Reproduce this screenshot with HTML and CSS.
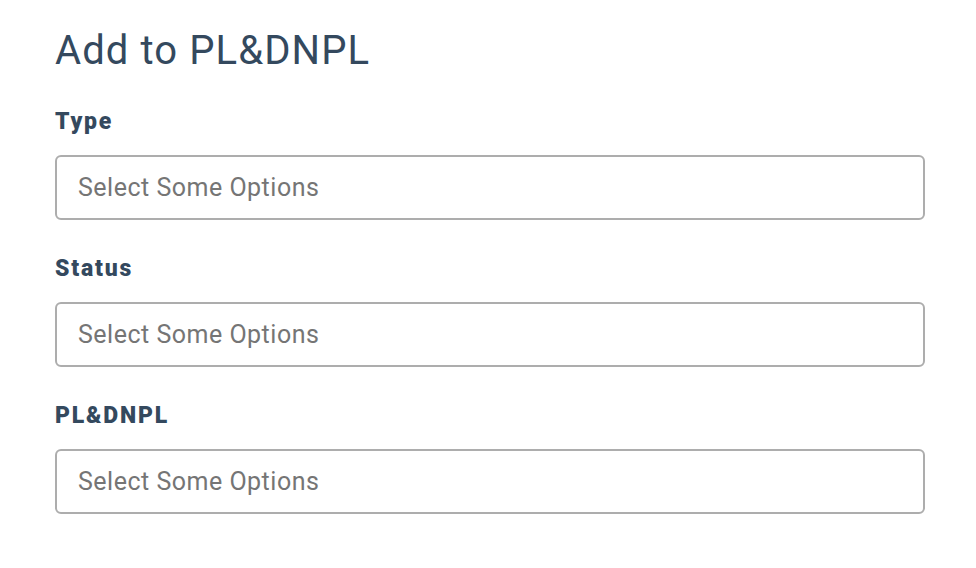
FILE: index.html
```html
<!DOCTYPE html>
<html lang="en">
<head>
    <meta charset="UTF-8">
    <meta name="viewport" content="width=device-width, initial-scale=1.0">
    <title>Add to PL&amp;DNPL</title>
    <link rel="stylesheet" href="styles.css">
</head>
<body>
    <div class="panel">
        <h1>Add to PL&amp;DNPL</h1>
        <div class="field">
            <label for="type">Type</label>
            <input type="text" id="type" placeholder="Select Some Options">
        </div>
        <div class="field">
            <label for="status">Status</label>
            <input type="text" id="status" placeholder="Select Some Options">
        </div>
        <div class="field">
            <label for="list">PL&amp;DNPL</label>
            <input type="text" id="list" placeholder="Select Some Options">
        </div>
    </div>
</body>
</html>
```

FILE: styles.css
```css
body {
    font-family: Roboto, "Liberation Sans", sans-serif;
    margin: 0;
    background-color: #fff;
    color: #34495e;
}
.panel {
    padding: 28px 51px 0 55px;
}
h1 {
    font-size: 40px;
    font-weight: 400;
    letter-spacing: 1.1px;
    line-height: 46px;
    margin: 0 0 35px 0;
}
.field {
    display: flex;
    flex-direction: column;
    margin-bottom: 36px;
}
label {
    font-size: 23px;
    font-weight: 900;
    letter-spacing: 1.8px;
    line-height: 26px;
    margin-bottom: 20px;
}
input {
    box-sizing: border-box;
    height: 65px;
    width: 100%;
    padding: 0 21px;
    border: 2px solid #adadad;
    border-radius: 6px;
    font-family: inherit;
    font-size: 25px;
    letter-spacing: 0.5px;
    color: #333;
    outline: none;
}
input::placeholder {
    color: #757575;
}
```
